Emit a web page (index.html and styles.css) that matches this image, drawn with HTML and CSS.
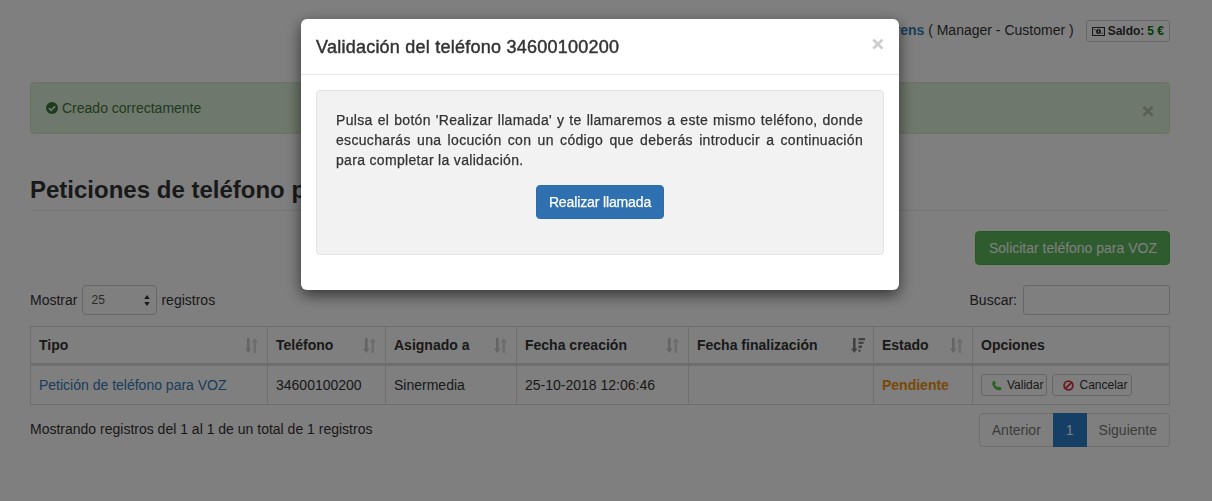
FILE: index.html
```html
<!DOCTYPE html>
<html lang="es">
<head>
<meta charset="utf-8">
<title>Peticiones de teléfono</title>
<link rel="stylesheet" href="styles.css">
</head>
<body>
<svg class="defs" width="0" height="0" aria-hidden="true">
  <symbol id="sort" viewBox="0 0 13 15">
    <path d="M2 0h2.600v10.500H6.500L3.300 15 0 10.500h2z"/>
    <path d="M8.500 15h2.600V4.500H13L9.800 0 6.600 4.500h1.900z" opacity=".7"/>
  </symbol>
</svg>
<div class="page">
  <div class="topbar">
    <span class="user"><a href="#">Orens</a> ( Manager - Customer )</span>
    <span class="saldo">
      <svg class="money" viewBox="0 0 13 9"><path fill-rule="evenodd" d="M0 0h13v9H0zM1.100 1.100v6.800h10.800V1.100z"/><path fill-rule="evenodd" d="M6.500 2a2.500 2.500 0 1 1 0 5 2.500 2.500 0 0 1 0-5zM6 3.500v2h1v-2z"/><rect x="2.400" y="2.200" width="1.100" height="1.100"/><rect x="9.500" y="5.700" width="1.100" height="1.100"/></svg>
      Saldo: <span class="credit">5 €</span>
    </span>
  </div>
  <div class="alert">
    <span class="alert-msg">
      <svg class="check" viewBox="0 0 12 12"><circle cx="6" cy="6" r="6"/><path d="M2.900 6.100l2.200 2.200 4-4" fill="none" stroke="#dff0d8" stroke-width="1.700"/></svg>
      Creado correctamente
    </span>
    <span class="alert-close">×</span>
  </div>
  <h3 class="title">Peticiones de teléfono para VOZ</h3>
  <div class="actions"><a class="btn-success" href="#">Solicitar teléfono para VOZ</a></div>
  <div class="filters">
    <label class="length">Mostrar
      <span class="select">25
        <svg class="updown" viewBox="0 0 6 11"><path d="M3 0l2.800 4H.2zM3 11L.2 7h5.600z"/></svg>
      </span>
      registros</label>
    <label class="search">Buscar: <span class="input"></span></label>
  </div>
  <table class="data">
    <thead>
      <tr>
        <th class="c1"><span class="th">Tipo<svg class="sort"><use href="#sort"/></svg></span></th>
        <th class="c2"><span class="th">Teléfono<svg class="sort"><use href="#sort"/></svg></span></th>
        <th class="c3"><span class="th">Asignado a<svg class="sort"><use href="#sort"/></svg></span></th>
        <th class="c4"><span class="th">Fecha creación<svg class="sort"><use href="#sort"/></svg></span></th>
        <th class="c5"><span class="th">Fecha finalización
          <svg class="sort sort-active" viewBox="0 0 14 15"><path d="M2 0h2.600v10.500H6.500L3.300 15 0 10.500h2z"/><path d="M7.500 0H14v2.300H7.500zM7.500 3.800h5v2.300h-5zM7.500 7.600h3.500v2.300H7.500zM7.500 11.400h2v2.300h-2z"/></svg></span></th>
        <th class="c6"><span class="th">Estado<svg class="sort"><use href="#sort"/></svg></span></th>
        <th class="c7">Opciones</th>
      </tr>
    </thead>
    <tbody>
      <tr>
        <td><a href="#">Petición de teléfono para VOZ</a></td>
        <td>34600100200</td>
        <td>Sinermedia</td>
        <td>25-10-2018 12:06:46</td>
        <td></td>
        <td class="pending">Pendiente</td>
        <td class="options">
          <span class="btn-xs"><svg class="phone" viewBox="0 0 12 12"><path d="M2.800.3l1.900 3-1.200 1.200c.6 1.600 1.900 3 3.800 3.800l1.200-1.200 3.100 1.800c-.3 1.700-1.400 2.900-3 2.800C4.300 11.500.5 7.300.3 3.200.3 1.900 1.300.7 2.800.3z"/></svg>Validar</span>
          <span class="btn-xs"><svg class="ban" viewBox="0 0 12 12"><circle cx="6" cy="6" r="4.800" fill="none" stroke-width="2"/><path d="M2.800 9.200l6.400-6.400" stroke-width="2"/></svg>Cancelar</span>
        </td>
      </tr>
    </tbody>
  </table>
  <div class="table-foot">
    <div class="info">Mostrando registros del 1 al 1 de un total de 1 registros</div>
    <div class="pager"><span class="pg">Anterior</span><span class="pg active">1</span><span class="pg">Siguiente</span></div>
  </div>
</div>
<div class="backdrop"></div>
<div class="modal">
  <div class="modal-header">
    <h4 class="modal-title">Validación del teléfono 34600100200</h4>
    <span class="modal-close">×</span>
  </div>
  <div class="modal-body">
    <div class="well">
      <p class="well-text">Pulsa el botón 'Realizar llamada' y te llamaremos a este mismo teléfono, donde escucharás una locución con un código que deberás introducir a continuación para completar la validación.</p>
      <div class="well-action"><a class="btn-primary" href="#">Realizar llamada</a></div>
    </div>
  </div>
</div>
</body>
</html>
```
FILE: styles.css
```css
* { box-sizing: border-box; }
html, body { margin: 0; height: 100%; }
body {
  font-family: "Liberation Sans", Arial, sans-serif;
  font-size: 14px;
  line-height: 20px;
  color: #333;
  background: #fff;
  overflow: hidden;
}
a { color: #337ab7; text-decoration: none; }
.defs { position: absolute; }
.page { padding: 20px 42px 0 30px; }

.topbar { display: flex; justify-content: flex-end; align-items: flex-start; height: 22px; }
.user a { font-weight: bold; }
.saldo {
  margin-left: 12px;
  height: 22px;
  padding: 0 5px;
  display: inline-flex;
  align-items: center;
  gap: 3px;
  font-size: 12px;
  font-weight: bold;
  border: 1px solid #ccc;
  border-radius: 3px;
}
.money { width: 13px; height: 9px; fill: #333; }
.credit { color: #0a7a0a; }

.alert {
  margin-top: 40px;
  height: 52px;
  padding: 0 15px;
  display: flex;
  align-items: center;
  justify-content: space-between;
  color: #3c763d;
  background: #dff0d8;
  border: 1px solid #d6e9c6;
  border-radius: 4px;
}
.alert-msg { display: inline-flex; align-items: center; gap: 4px; }
.check { width: 12px; height: 12px; fill: #3c763d; }
.alert-close { font-size: 21px; font-weight: bold; line-height: 1; color: #000; opacity: .2; margin-top: 4px; -webkit-text-stroke: .4px #000; }

.title {
  margin: 42px 0 0;
  height: 35px;
  font-size: 24px;
  line-height: 28px;
  font-weight: bold;
  color: #333;
  border-bottom: 1px solid #eee;
}
.actions { display: flex; justify-content: flex-end; margin-top: 20px; }
.btn-success {
  height: 34px;
  padding: 0 12px 0 13px;
  display: flex;
  align-items: center;
  color: #fff;
  background: #5cb85c;
  border: 1px solid #4cae4c;
  border-radius: 4px;
}

.filters { display: flex; justify-content: space-between; align-items: center; margin-top: 20px; height: 30px; }
.length, .search { display: inline-flex; align-items: center; }
.select {
  width: 75px;
  height: 30px;
  margin: 0 4px 0 5px;
  padding: 0 6px 0 8px;
  display: inline-flex;
  align-items: center;
  justify-content: space-between;
  font-size: 12px;
  color: #555;
  border: 1px solid #ccc;
  border-radius: 4px;
}
.updown { width: 6px; height: 11px; fill: #333; }
.input {
  display: block;
  width: 147px;
  height: 30px;
  margin-left: 6px;
  background: #fff;
  border: 1px solid #ccc;
  border-radius: 3px;
}

.data {
  width: 1140px;
  margin-top: 11px;
  table-layout: fixed;
  border-collapse: collapse;
  border: 1px solid #ddd;
}
.data th, .data td { padding: 8px; border: 1px solid #ddd; text-align: left; vertical-align: middle; }
.data th { height: 38px; border-bottom: 3px solid #ddd; font-weight: bold; }
.data td { height: 39px; }
.c1 { width: 237px; }
.c2 { width: 118px; }
.c3 { width: 131px; }
.c4 { width: 172px; }
.c5 { width: 185px; }
.c6 { width: 99px; }
.th { display: flex; align-items: center; justify-content: space-between; white-space: nowrap; }
.sort { flex: none; width: 13px; height: 15px; fill: #333; opacity: .25; margin: -1px 1px -1px 0; }
.sort-active { width: 14px; opacity: .6; margin-right: 0; }
.pending { font-weight: bold; color: #f0930f; }
.options { white-space: nowrap; padding-top: 0; padding-bottom: 0; font-size: 0; }
.btn-xs {
  display: inline-flex;
  align-items: center;
  height: 22px;
  padding: 0 3px 0 10px;
  font-size: 12px;
  line-height: 1.5;
  color: #333;
  background: #fff;
  border: 1px solid #ccc;
  border-radius: 3px;
  vertical-align: middle;
}
.btn-xs + .btn-xs { margin-left: 5px; }
.phone { width: 10px; height: 11px; margin-right: 5px; fill: #55c040; }
.ban { width: 11px; height: 11px; margin-right: 5px; fill: none; stroke: #d8303a; }

.table-foot { display: flex; justify-content: space-between; align-items: flex-start; margin-top: 8px; }
.info { margin-top: 6px; }
.pager { display: flex; height: 34px; }
.pg {
  display: flex;
  align-items: center;
  padding: 0 12px;
  color: #777;
  background: #fff;
  border: 1px solid #ddd;
  margin-left: -1px;
}
.pg:first-child { border-radius: 4px 0 0 4px; }
.pg:last-child { border-radius: 0 4px 4px 0; }
.pg.active { position: relative; z-index: 1; color: #fff; background: #2c7ecc; border-color: #2c7ecc; }

.backdrop { position: fixed; inset: 0; z-index: 2; background: rgba(0, 0, 0, .5); }
.modal {
  position: fixed;
  z-index: 3;
  left: 301px;
  top: 19px;
  width: 598px;
  height: 271px;
  background: #fff;
  border-radius: 6px;
  box-shadow: 0 5px 15px rgba(0, 0, 0, .6);
}
.modal-header {
  height: 56px;
  padding: 0 15px;
  display: flex;
  align-items: center;
  justify-content: space-between;
  border-bottom: 1px solid #e5e5e5;
}
.modal-title { margin: 0; font-size: 18px; line-height: 20px; font-weight: 500; letter-spacing: .24px; -webkit-text-stroke: .45px #333; color: #333; }
.modal-close { font-size: 21px; font-weight: bold; line-height: 1; color: #000; opacity: .2; margin-top: -6px; -webkit-text-stroke: .4px #000; }
.modal-body { padding: 15px; }
.well {
  height: 165px;
  padding: 19px 20px 19px 19px;
  background: #f2f2f2;
  border: 1px solid #e3e3e3;
  border-radius: 4px;
}
.well-text { margin: 0; text-align: justify; letter-spacing: .32px; -webkit-text-stroke: .25px #333; color: #333; }
.well-action { display: flex; justify-content: center; margin-top: 15px; padding-left: 1px; }
.btn-primary {
  height: 34px;
  padding: 0 12px;
  display: flex;
  align-items: center;
  letter-spacing: -.13px;
  -webkit-text-stroke: .25px #fff;
  color: #fff;
  background: #2e70b0;
  border: 1px solid #2e6da4;
  border-radius: 4px;
}
```
